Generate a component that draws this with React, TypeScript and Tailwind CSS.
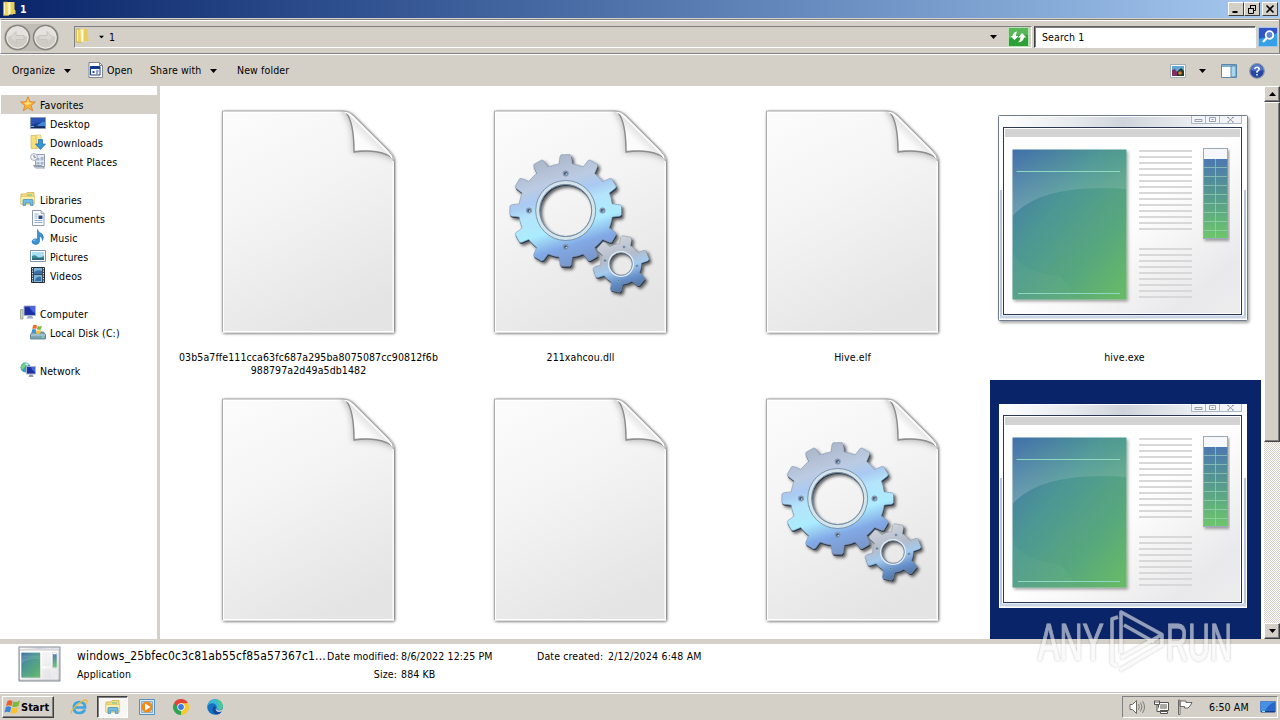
import React from 'react'

type FileKind = 'blank' | 'dll' | 'exe'

interface FileItem {
  id: number
  name: string
  kind: FileKind
  selected?: boolean
}

interface NavItem {
  label: string
  icon: React.ReactNode
  root?: boolean
  gap?: boolean
  active?: boolean
}

const files: FileItem[] = [
  { id: 1, name: '03b5a7ffe111cca63fc687a295ba8075087cc90812f6b988797a2d49a5db1482', kind: 'blank' },
  { id: 2, name: '211xahcou.dll', kind: 'dll' },
  { id: 3, name: 'Hive.elf', kind: 'blank' },
  { id: 4, name: 'hive.exe', kind: 'exe' },
  { id: 5, name: '', kind: 'blank' },
  { id: 6, name: '', kind: 'blank' },
  { id: 7, name: '', kind: 'dll' },
  { id: 8, name: '', kind: 'exe', selected: true },
]

const gearPath = (cx: number, cy: number, outer: number, root: number, teeth: number, offset: number, hole: number) => {
  const step = (Math.PI * 2) / teeth
  const point = (r: number, a: number) => `${(cx + r * Math.sin(a)).toFixed(2)} ${(cy - r * Math.cos(a)).toFixed(2)}`
  const parts: string[] = []
  for (let i = 0; i < teeth; i++) {
    const a = offset + i * step
    parts.push(point(root, a - step * 0.27), point(outer - 1.5, a - step * 0.2), point(outer, a - step * 0.15))
    parts.push(point(outer, a + step * 0.15), point(outer - 1.5, a + step * 0.2), point(root, a + step * 0.27))
    parts.push(point(root, a + step * 0.5))
  }
  return `M${parts.join('L')}ZM${cx - hole} ${cy}a${hole} ${hole} 0 1 0 ${hole * 2} 0a${hole} ${hole} 0 1 0 ${-hole * 2} 0Z`
}

const bigGear = gearPath(119.7, 118.5, 56, 47, 12, 0, 26)
const smallGear = gearPath(175, 172, 28.5, 20.5, 6, 0.2, 11.5)

const Gears: React.FC<{ id: number }> = ({ id }) => (
  <g>
    <defs>
      <linearGradient id={`gear${id}`} x1="0.35" y1="0" x2="0.65" y2="1">
        <stop offset="0" stopColor="#a9b4c6" />
        <stop offset="0.24" stopColor="#bccbe2" />
        <stop offset="0.36" stopColor="#a9caf2" />
        <stop offset="0.46" stopColor="#b4e4fb" />
        <stop offset="0.64" stopColor="#abecfd" />
        <stop offset="0.8" stopColor="#82a9e6" />
        <stop offset="1" stopColor="#7893c4" />
      </linearGradient>
      <linearGradient id={`cog${id}`} x1="0.3" y1="0" x2="0.6" y2="1">
        <stop offset="0" stopColor="#d3d5db" />
        <stop offset="0.4" stopColor="#b3bccb" />
        <stop offset="0.58" stopColor="#a3cbf0" />
        <stop offset="0.78" stopColor="#6791ca" />
        <stop offset="1" stopColor="#4f7099" />
      </linearGradient>
      <filter id={`gs${id}`} x="-20%" y="-20%" width="140%" height="140%">
        <feDropShadow dx="2" dy="2" stdDeviation="1.5" floodColor="#222" floodOpacity="0.7" />
      </filter>
    </defs>
    <g filter={`url(#gs${id})`}>
      <path d={bigGear} transform="translate(0.5 1.3)" fill="#1f2e42" fillRule="evenodd" />
      <path d={bigGear} fill={`url(#gear${id})`} stroke="#8095ad" strokeWidth="0.6" fillRule="evenodd" />
    </g>
    <circle cx="119.7" cy="118.5" r="28" fill="none" stroke="#d5e3ea" strokeWidth="3.2" />
    <circle cx="119.7" cy="118.5" r="30" fill="none" stroke="#7390a8" strokeWidth="0.9" />
    <circle cx="119.7" cy="118.5" r="26" fill="none" stroke="#75889a" strokeWidth="1" />
    {[[119.7, 81.5], [156.5, 118.5], [119.7, 155], [83, 118.5]].map(([x, y]) => (
      <g key={`${x}-${y}`}>
        <circle cx={x} cy={y} r="3" fill="#8298b2" />
        <circle cx={x} cy={y} r="1.6" fill="#3d536f" />
        <circle cx={x + 0.6} cy={y + 0.6} r="0.8" fill="#c2e2f5" />
      </g>
    ))}
    <g filter={`url(#gs${id})`}>
      <path d={smallGear} transform="translate(0.5 1.1)" fill="#1f2e42" fillRule="evenodd" />
      <path d={smallGear} fill={`url(#cog${id})`} stroke="#8494a8" strokeWidth="0.5" fillRule="evenodd" />
    </g>
    <circle cx="175" cy="172" r="12.3" fill="none" stroke="#e3ebf1" strokeWidth="1.5" />
    <circle cx="175" cy="172" r="11.3" fill="none" stroke="#66809b" strokeWidth="0.7" />
    {[[178, 155], [191, 174], [172.5, 188.5], [159, 168.5]].map(([x, y]) => (
      <circle key={x} cx={x} cy={y} r="1.3" fill="#5d7694" stroke="#a4bcd4" strokeWidth="0.5" />
    ))}
  </g>
)

const PageIcon: React.FC<{ id: number; gears?: boolean }> = ({ id, gears }) => (
  <svg className="block" width="271" height="258" viewBox="0 0 271 258">
    <defs>
      <linearGradient id={`pg${id}`} x1="0.2" y1="0" x2="0.6" y2="1">
        <stop offset="0" stopColor="#fbfbfb" />
        <stop offset="0.4" stopColor="#f4f4f4" />
        <stop offset="1" stopColor="#e4e4e4" />
      </linearGradient>
      <linearGradient id={`fold${id}`} x1="0.1" y1="0.9" x2="0.6" y2="0.4">
        <stop offset="0" stopColor="#fff" />
        <stop offset="0.6" stopColor="#fbfbfb" />
        <stop offset="1" stopColor="#d8d8d8" />
      </linearGradient>
      <filter id={`ps${id}`} x="-10%" y="-10%" width="120%" height="120%">
        <feDropShadow dx="0.7" dy="0.7" stdDeviation="1.4" floodColor="#000" floodOpacity="0.75" />
      </filter>
      <filter id={`fs${id}`} x="-50%" y="-50%" width="200%" height="200%">
        <feGaussianBlur stdDeviation="3" />
      </filter>
      <clipPath id={`pc${id}`}>
        <path d="M48 18.500H168Q174 18.500 179 23L214 58Q220 64 220 69V240.500H48Z" />
      </clipPath>
    </defs>
    <path d="M48.500 19H168Q174 18.500 179 23L214 58Q220 64 220 69V240.500H48.500Z" fill="#fff" filter={`url(#ps${id})`} />
    <path d="M49.500 20.500H168Q174 19.500 179 24L214 59Q219.500 65 219.500 70V239.500H49.500Z" fill={`url(#pg${id})`} />
    <path d="M48.500 240V19H168" fill="none" stroke="#ababab" />
    <path d="M49.500 20.500H168M219 69V239.500H49.500V20.500" fill="none" stroke="#fff" />
    <g clipPath={`url(#pc${id})`}>
      <path d="M166 17Q180 28 179 61Q207 59 221 69L222 55L178 13Z" fill="#777" opacity="0.5" filter={`url(#fs${id})`} />
    </g>
    <path d="M168 19Q180.500 25 180.500 58.500Q210 57 219.500 68Q219 63 214 58L179 23Q174 19 168 19Z" fill={`url(#fold${id})`} />
    <path d="M172 20.500Q180 30 180 60Q206 56.500 218 66" fill="none" stroke="#8d8d8d" strokeWidth="1.400" />
    <path d="M168 19Q174 18.500 179 23L214 58Q219.500 64 219.500 69" fill="none" stroke="#a5a5a5" strokeWidth="1" />
    <path d="M171 20.500Q174 20.500 178 24.500L213 59.500Q217 63 218 66" fill="none" stroke="#fff" strokeWidth="1.400" />
    {gears && <Gears id={id} />}
  </svg>
)

const lineRows = [...Array.from({ length: 14 }, (_, i) => 59 + i * 6), ...Array.from({ length: 9 }, (_, i) => 157 + i * 6)]

const ExeArt: React.FC<{ id: number; selected?: boolean }> = ({ id, selected }) => (
  <g>
    <defs>
      <linearGradient id={`fr${id}`} x1="0" y1="0" x2="1" y2="0">
        <stop offset="0" stopColor="#fff" />
        <stop offset="0.3" stopColor="#e6e9ed" />
        <stop offset="0.5" stopColor="#cfd4dc" />
        <stop offset="0.75" stopColor="#e6eaef" />
        <stop offset="1" stopColor="#fff" />
      </linearGradient>
      <linearGradient id={`bd${id}`} x1="0" y1="0" x2="1" y2="1">
        <stop offset="0.5" stopColor="#fff" />
        <stop offset="0.85" stopColor="#e9e9eb" />
        <stop offset="1" stopColor="#ededee" />
      </linearGradient>
      <linearGradient id={`pic${id}`} x1="0" y1="0" x2="0.9" y2="1">
        <stop offset="0" stopColor="#416fab" />
        <stop offset="0.4" stopColor="#4d9794" />
        <stop offset="0.75" stopColor="#58a87c" />
        <stop offset="1" stopColor="#66b968" />
      </linearGradient>
      <linearGradient id={`gloss${id}`} x1="0" y1="0" x2="0" y2="1">
        <stop offset="0" stopColor="#fff" stopOpacity="0" />
        <stop offset="1" stopColor="#fff" stopOpacity="0.2" />
      </linearGradient>
      <linearGradient id={`bar${id}`} x1="0" y1="0" x2="0" y2="1">
        <stop offset="0" stopColor="#4c78b0" />
        <stop offset="0.45" stopColor="#55998f" />
        <stop offset="1" stopColor="#6cc66c" />
      </linearGradient>
      <filter id={`es${id}`} x="-10%" y="-10%" width="120%" height="125%">
        <feDropShadow dx="1.500" dy="2" stdDeviation="1.500" floodColor="#000" floodOpacity="0.35" />
      </filter>
    </defs>
    {selected ? (
      <rect x="9" y="24" width="248" height="204" fill="#fff" />
    ) : (
      <rect x="8.500" y="23.500" width="249" height="205" rx="1" fill="#fff" stroke="#717b8d" filter={`url(#es${id})`} />
    )}
    <rect x="10" y="25" width="246" height="10" fill={`url(#fr${id})`} />
    <path d="M11 98V225M255 98V225" stroke="#b9c8dc" strokeWidth="2" />
    <path d="M10 225H256" stroke="#c9d5e4" strokeWidth="3" />
    <rect x="13.500" y="35.500" width="238" height="187" fill={`url(#bd${id})`} stroke="#2c3852" />
    <rect x="14.500" y="36.500" width="236" height="185" fill="none" stroke="#fff" />
    <rect x="15" y="37" width="235" height="8" fill="#d3d3d3" />
    <path d="M201.500 24V31.500H251.500V24M215.500 24V31M229.500 24V31" fill="#f3f4f7" stroke="#9ba6b8" strokeWidth="0.800" />
    <path d="M205 27.500h7v2h-7ZM219.500 25.500h6v4h-6ZM221.500 27.500h2M238 25.500l5 4.500M243 25.500l-5 4.500M237 25.500h2M242 25.500h2M237 30h2M242 30h2" fill="none" stroke="#8d98aa" strokeWidth="0.900" />
    <g filter={`url(#es${id})`}>
      <rect x="22.500" y="57.500" width="114" height="150" fill={`url(#pic${id})`} />
    </g>
    <path d="M22.500 57.500H136.500V97Q52 91 22.500 124Z" fill={`url(#gloss${id})`} />
    <path d="M22.500 162Q36 182 70 184Q90 204 80 207.500H22.500Z" fill="#8ec0a0" opacity="0.1" />
    <path d="M26.500 79.500H130M28 201.500H130" stroke="#8fd9c2" strokeWidth="1" />
    <g fill="#d8d8d8">
      {lineRows.map((y) => (
        <rect key={y} x="149" y={y - 1} width="53" height="2" />
      ))}
    </g>
    <g filter={`url(#es${id})`}>
      <rect x="213.500" y="56.500" width="24" height="90" fill="#f5f7fa" stroke="#9daabb" />
    </g>
    <rect x="214" y="67" width="23.500" height="79" fill={`url(#bar${id})`} />
    <path d="M214 75.500h23M214 84.500h23M214 93.500h23M214 102.500h23M214 111.500h23M214 120.500h23M214 129.500h23M214 138.500h23M225.500 67v79" stroke="#a4d3bd" strokeWidth="0.800" opacity="0.800" />
  </g>
)

const FolderIcon = () => (
  <svg width="16" height="16" viewBox="0 0 16 16">
    <path d="M2.500 1h4l1 1v12.500H2.500Z" fill="#ecd468" stroke="#c6a642" strokeWidth="0.600" />
    <path d="M6 1h6v12.500H7Z" fill="#f6e58e" />
    <path d="M7.500 2.500l1.500-1V13l-1.500 1.500Z" fill="#fffbe0" />
    <path d="M10 1h3.500v7.500l1 1V13H10Z" fill="#e8cc5c" />
    <path d="M3.500 2v11" stroke="#fdf4b8" />
  </svg>
)

const LibraryIcon: React.FC<{ size?: number }> = ({ size = 16 }) => (
  <svg width={size} height={size} viewBox="0 0 16 16">
    <path d="M1 3h5l1-1.500h7V13H1Z" fill="#f2dc7c" stroke="#cba94a" strokeWidth="0.700" />
    <path d="M7 3h5v2H7z" fill="#a9d18b" />
    <path d="M.7 5.500h14V13H.7Z" fill="#fbeeab" stroke="#d1b65b" strokeWidth="0.500" />
    <path d="M3 14.500V9.500q0-1 1-1h8q1 0 1 1v5h-2.500V12h-5v2.500Z" fill="#72bce4" stroke="#3d8ab8" strokeWidth="0.700" />
  </svg>
)

const DesktopIcon: React.FC<{ size?: number }> = ({ size = 16 }) => (
  <svg width={size} height={size} viewBox="0 0 16 16">
    <path d="M.5 2.500h15v11H.5Z" fill="#1c3f93" stroke="#8b9bb5" />
    <path d="M1 3h14v5q-6-2-14 2Z" fill="#2a55b5" />
    <path d="M9 9q4-3 6-2v4H7Z" fill="#4385d6" />
    <path d="M1 11.500h14V13H1Z" fill="#152a55" />
    <path d="M1 11.500h3" stroke="#6ec5ef" />
  </svg>
)

const ExeMini = () => (
  <svg width="15" height="16" viewBox="0 0 15 16">
    <path d="M1 .5h10.500l3 3v12H1Z" fill="#fff" stroke="#7b8490" />
    <path d="M11.500.5v3h3" fill="none" stroke="#7b8490" />
    <path d="M2.500 4.500h9.500v8.500H2.500Z" fill="#fff" stroke="#123a8c" />
    <path d="M2.500 4h9.500v3H2.500z" fill="#123a8c" />
    <path d="M4.500 9h2v2h-2zM8 8.500h2.500v1H8zM8 10.500h2v1h-2z" fill="#1d4ba5" />
  </svg>
)

const navItems: NavItem[] = [
  {
    label: 'Favorites',
    root: true,
    active: true,
    icon: (
      <svg width="16" height="16" viewBox="0 0 16 16">
        <path d="M8 .7l2 5 5.400.3-4.200 3.400 1.500 5.400L8 11.800l-4.700 3 1.500-5.400L.6 6 6 5.700Z" fill="#f9b53a" stroke="#d97f26" strokeWidth="0.800" />
        <path d="M8 3l1 3.500 3 .4-5 2-3-2 2.800-.4Z" fill="#ffe17c" />
      </svg>
    ),
  },
  { label: 'Desktop', icon: <DesktopIcon /> },
  {
    label: 'Downloads',
    icon: (
      <svg width="16" height="16" viewBox="0 0 16 16">
        <path d="M1 1.500h5l1 13H1Z" fill="#f4df79" stroke="#cdb24a" strokeWidth="0.600" />
        <path d="M6 1h5v13H7Z" fill="#f9eaa0" stroke="#cdb24a" strokeWidth="0.500" />
        <path d="M8.500 5.500h4v4.500h3l-5 5.500-5-5.500h3Z" fill="#3597db" stroke="#1f6aa8" strokeWidth="0.700" />
      </svg>
    ),
  },
  {
    label: 'Recent Places',
    icon: (
      <svg width="16" height="16" viewBox="0 0 16 16">
        <path d="M5.500 1.500h9v12h-9ZM3.500 12.500h8l3 2.500h-9Z" fill="#e6edf4" stroke="#8593a3" strokeWidth="0.900" />
        <path d="M6.500 5h3v2.500h-3zM10.500 4h3v3.500h-3zM6.500 9h3v2.500h-3zM10.500 9h3v2.500h-3z" fill="#a3b6c9" />
        <circle cx="4" cy="4" r="3.400" fill="#f3f6f9" stroke="#9aa7b6" strokeWidth="0.900" />
        <path d="M4 2v2.300h2" fill="none" stroke="#5e6c7c" strokeWidth="0.800" />
      </svg>
    ),
  },
  { label: 'Libraries', root: true, gap: true, icon: <LibraryIcon /> },
  {
    label: 'Documents',
    icon: (
      <svg width="16" height="16" viewBox="0 0 16 16">
        <path d="M2.500.5h8.500l3 3v12H2.500Z" fill="#fdfdfe" stroke="#8d9bae" />
        <path d="M11 .5v3h3" fill="#dde6f0" stroke="#8d9bae" strokeWidth="0.800" />
        <path d="M4.500 4h4M4.500 6h3M4.500 8h3M4.500 10.500h8M4.500 12.500h8" stroke="#88a5cc" strokeWidth="0.900" />
        <path d="M8.500 5.500h4v3.500h-4z" fill="#274b83" />
      </svg>
    ),
  },
  {
    label: 'Music',
    icon: (
      <svg width="16" height="16" viewBox="0 0 16 16">
        <path d="M7.500.5Q8 3 12 5q2.500 3 .5 6.500Q12.500 8 9.500 7v5.500Q9 15.500 5.500 15.500 2 15 2 12.500 2.500 9.700 6 9.800l1.500.5Z" fill="#3b93d8" stroke="#1f68ab" strokeWidth="0.600" />
        <path d="M3.500 12q.6-1.300 2-1.200" stroke="#b5e2fb" fill="none" />
      </svg>
    ),
  },
  {
    label: 'Pictures',
    icon: (
      <svg width="16" height="16" viewBox="0 0 16 16">
        <path d="M.5 2.500h15v11H.5Z" fill="#fff" stroke="#7e94a8" />
        <path d="M2 4h12v8H2z" fill="#a9def5" />
        <path d="M2 8q3-1.500 5 .5T14 8v4H2Z" fill="#3a8d92" />
        <path d="M2 10.500q5-1 12 0V12H2Z" fill="#2d6678" />
      </svg>
    ),
  },
  {
    label: 'Videos',
    icon: (
      <svg width="16" height="16" viewBox="0 0 16 16">
        <path d="M1.500.5h13v15h-13Z" fill="#3c4857" stroke="#212a35" />
        <path d="M4 1h8v6H4zM4 8h8v7H4z" fill="#7db4dc" />
        <path d="M4 5q4-3 8-1v3H4zM5 14q1-5 6-4v4z" fill="#3a6fa3" />
        <path d="M2.500 1v14M13.500 1v14" stroke="#e5edf4" strokeDasharray="1.200 1.300" />
      </svg>
    ),
  },
  {
    label: 'Computer',
    root: true,
    gap: true,
    icon: (
      <svg width="16" height="16" viewBox="0 0 16 16">
        <path d="M.5 4.500h2.500v9.500H.5Z" fill="#cbd8bd" stroke="#8f9d94" strokeWidth="0.800" />
        <path d="M4 1h11.500v9.500H4Z" fill="#1e2fa5" stroke="#a9b4c4" />
        <path d="M9 1.500h6V8Q12 7 9 1.500Z" fill="#4a66dd" />
        <path d="M8 11h4l1.500 2.500h-7Z" fill="#9eabc0" />
      </svg>
    ),
  },
  {
    label: 'Local Disk (C:)',
    icon: (
      <svg width="16" height="16" viewBox="0 0 16 16">
        <path d="M.5 10.500l2-2.500h11l2 2.500v4.500H.5Z" fill="#7ba5b4" stroke="#557886" strokeWidth="0.800" />
        <path d="M1 11h14" stroke="#c4dde6" />
        <path d="M12 13h2" stroke="#7ef08b" />
        <path d="M3 1.500Q5 0 7 1.500L6.300 5Q4.500 3.800 2.300 5Z" fill="#ee6b2d" />
        <path d="M7.600 1.800Q9.500 3 12 1.800L11 5.200Q9 6.200 6.900 5.200Z" fill="#7fb93c" />
        <path d="M2.100 5.600Q4 4.500 6.100 5.700L5.400 9Q3.500 8 1.500 9Z" fill="#3b8edb" />
        <path d="M6.700 6Q8.800 7 11 6l-.9 3.500Q8 10.300 6 9.300Z" fill="#f9c22e" />
      </svg>
    ),
  },
  {
    label: 'Network',
    root: true,
    gap: true,
    icon: (
      <svg width="16" height="16" viewBox="0 0 16 16">
        <circle cx="5.500" cy="5.500" r="5" fill="#3c9cb5" />
        <path d="M2 3q3-3 6-1.500Q5 3 5 5L2 8Q0 5 2 3Z" fill="#75d27f" />
        <path d="M5 2q2-1 4 0l-2 2Z" fill="#d2f4fa" />
        <path d="M6.500 4.500h9v7.500h-9Z" fill="#1e2fa5" stroke="#a9b4c4" />
        <path d="M11 5h4v5q-3-1-4-5Z" fill="#4a66dd" />
        <path d="M9.500 12.500h3l1 2.500h-5Z" fill="#8a97ab" />
      </svg>
    ),
  },
]

const Caret = () => (
  <svg width="7" height="4" viewBox="0 0 7 4">
    <path d="M0 0h7L3.500 4Z" />
  </svg>
)

const RoundButton: React.FC<{ flip?: boolean }> = ({ flip }) => (
  <svg className={flip ? '-scale-x-100' : ''} width="27" height="27" viewBox="0 0 27 27">
    <circle cx="13.500" cy="13.500" r="12" fill="#cfccc6" stroke="#85827c" strokeWidth="1.600" />
    <circle cx="13.500" cy="13.500" r="10.600" fill="none" stroke="#efedea" strokeWidth="1" />
    <path d="M3 13Q13 9 24 13A10.500 10.500 0 0 0 3 13Z" fill="#e4e2de" />
    <path d="M6 13.500l6-6v4h8v4h-8v4Z" fill="#dad7d2" stroke="#c3c0ba" strokeWidth="0.800" />
  </svg>
)

const WindowButton: React.FC<{ children: React.ReactNode }> = ({ children }) => (
  <div className="flex h-[14px] w-4 items-center justify-center border border-t-white border-l-white border-r-[#404040] border-b-[#404040] bg-[#d4d0c8]">
    <svg width="10" height="10" viewBox="0 0 10 10" fill="none" stroke="#000">
      {children}
    </svg>
  </div>
)

const ScrollButton: React.FC<{ down?: boolean }> = ({ down }) => (
  <div className="flex h-4 w-4 items-center justify-center border border-t-white border-l-white border-r-[#404040] border-b-[#404040] bg-[#d4d0c8] shadow-[inset_-1px_-1px_0_#808080]">
    <svg className={down ? '' : 'rotate-180'} width="7" height="4" viewBox="0 0 7 4">
      <path d="M0 0h7L3.500 4Z" />
    </svg>
  </div>
)

const Watermark = () => (
  <svg className="absolute top-[600px] left-[1030px] overflow-visible" width="210" height="80" viewBox="0 0 210 80">
    <defs>
      <filter id="wm" x="-10%" y="-10%" width="120%" height="120%">
        <feDropShadow dx="0" dy="0" stdDeviation="1.300" floodColor="#333" floodOpacity="0.600" />
      </filter>
    </defs>
    <g filter="url(#wm)" opacity="0.580">
      <text x="8" y="59.500" textLength="66" lengthAdjust="spacingAndGlyphs" fontFamily="Liberation Sans, sans-serif" fontSize="52" fill="#f8f8f8" stroke="#f8f8f8" strokeWidth="1">
        ANY
      </text>
      <text x="136" y="59.500" textLength="66" lengthAdjust="spacingAndGlyphs" fontFamily="Liberation Sans, sans-serif" fontSize="52" fill="#f8f8f8" stroke="#f8f8f8" strokeWidth="1">
        RUN
      </text>
      <g fill="none" stroke="#f8f8f8" strokeWidth="3.500" strokeLinejoin="round">
        <path d="M88 17l-6 2V63l5 3M91 53V12L132 34.500 91 58M90 70L132 45V35M94 25L124 42" />
      </g>
    </g>
  </svg>
)

const App: React.FC = () => {
  return (
    <div className="relative flex h-[720px] w-[1280px] flex-col overflow-hidden bg-[#d4d0c8] font-['DejaVu_Sans_Condensed','DejaVu_Sans',sans-serif] text-[10.5px] leading-[13px] tracking-[0.12px] text-black">
      {/* Title bar */}
      <div className="flex h-[18px] shrink-0 items-center bg-gradient-to-r from-[#0a246a] to-[#a6caf0] pr-[2px] pl-px">
        <FolderIcon />
        <span className="ml-[3px] font-bold text-white">1</span>
        <div className="ml-auto flex">
          <WindowButton><path d="M1.500 8h5" strokeWidth="2" /></WindowButton>
          <WindowButton><path d="M3 1.500h6M3.500 1v3M8.500 1v5.500H7M1 4.500h6M1.500 4v5.500h5V4" /></WindowButton>
          <div className="ml-[2px]">
            <WindowButton><path d="M1.500 1.500l7 7M8.500 1.500l-7 7" strokeWidth="1.600" /></WindowButton>
          </div>
        </div>
      </div>

      {/* Address bar */}
      <div className="mt-px flex h-[35px] shrink-0 items-center border border-t-[#808080] border-r-[#808080] border-b-[#808080] border-l-white pt-px pr-px pl-[3px] shadow-[inset_0_1px_0_#fff,0_1px_0_#fff]">
        <div className="flex gap-px rounded-full bg-[#c0bdb7]">
          <RoundButton />
          <RoundButton flip />
        </div>
        <div className="ml-[15px] flex h-[22px] flex-1 items-center border border-t-[#808080] border-r-white border-b-white border-l-[#808080]">
          <span className="-mt-[2px] -ml-px"><FolderIcon /></span>
          <span className="ml-2 scale-75"><Caret /></span>
          <span className="ml-1">1</span>
          <span className="mr-[11px] ml-auto"><Caret /></span>
          <svg className="mr-[2px]" width="21" height="20" viewBox="0 0 21 20">
            <rect x="0.500" y="0.500" width="20" height="19" fill="#2f9f37" stroke="#b9e0b4" />
            <path d="M1 1h19v7Q10 6 1 12Z" fill="#58b858" />
            <path d="M2.500 9h2Q5 5 9 4.500 8 6.500 8 9h2.500L6.500 13Z" fill="#fff" />
            <path d="M18.500 10.500L14 6l-4 4.500h2.500q0 3-2.500 5 5-.5 6-5Z" fill="#fff" />
          </svg>
        </div>
        <div className="ml-[2px] flex h-[22px] w-[222px] items-center border border-t-[#606060] border-r-white border-b-white border-l-[#404040] bg-white pl-[7px] shadow-[inset_1px_1px_0_#808080]">
          Search 1
        </div>
        <svg className="ml-[2px]" width="20" height="20" viewBox="0 0 20 20">
          <rect x="0.500" y="0.500" width="19" height="19" fill="#2160c5" stroke="#a5c4ea" />
          <path d="M1 12Q12 10 19 5V19H1Z" fill="#35a0e6" />
          <path d="M1 1h18v5Q10 10 1 10Z" fill="#3153c4" />
          <circle cx="11.500" cy="8" r="3.800" fill="#5d86d6" stroke="#fff" strokeWidth="1.800" />
          <path d="M8.700 11L5 15" stroke="#fff" strokeWidth="2.200" />
        </svg>
      </div>

      {/* Command bar */}
      <div className="mt-px flex h-[31px] shrink-0 items-center pr-[15px] pl-3">
        <span className="w-[52px]">Organize</span>
        <Caret />
        <span className="-mt-px ml-[17px]"><ExeMini /></span>
        <span className="ml-1 w-[43px]">Open</span>
        <span className="w-[60px]">Share with</span>
        <Caret />
        <span className="ml-5">New folder</span>
        <svg className="ml-auto" width="16" height="14" viewBox="0 0 16 14">
          <path d="M.5.500h15v13H.5Z" fill="#fff" stroke="#a3acb5" />
          <path d="M2 2h12v10H2z" fill="#5fa6d3" />
          <path d="M2 12V6l3-1 2 3 2-2v6Z" fill="#7d2e63" />
          <path d="M7 12V8l2-2 2-2 3 3v5Z" fill="#1c3b2d" />
          <circle cx="10" cy="9" r="1.800" fill="#e07b2b" />
        </svg>
        <span className="ml-[13px]"><Caret /></span>
        <svg className="ml-[15px]" width="16" height="14" viewBox="0 0 16 14">
          <path d="M.5.500h15v13H.5Z" fill="#fff" stroke="#5a87a8" />
          <path d="M1 2h14" stroke="#7fb0d0" strokeWidth="2" />
          <path d="M10 2h5v11h-5z" fill="#a8d8ee" stroke="#5a87a8" />
        </svg>
        <svg className="ml-3" width="16" height="16" viewBox="0 0 16 16">
          <circle cx="8" cy="8" r="7.300" fill="#2546a0" stroke="#8c96ab" strokeWidth="1.300" />
          <path d="M2 7a6 6 0 0 1 12 0Q8 9 2 7Z" fill="#5478c6" />
          <path d="M5.800 6Q5.900 4.200 8 4.200T10.200 6Q10.200 7.200 8 8.600V9.800M8 11v1.600" fill="none" stroke="#fff" strokeWidth="1.500" />
        </svg>
      </div>

      {/* Explorer body */}
      <div className="flex h-[553px] shrink-0 bg-white">
        <div className="w-[157px] pt-[9px] pl-px">
          {navItems.map((item) => (
            <div key={item.label} className={item.gap ? 'pt-[19px]' : ''}>
              <div className={`flex h-[19px] items-center gap-1 ${item.active ? 'bg-[#d4d0c8]' : ''} ${item.root ? 'pl-[19px]' : 'pl-[29px]'}`}>
                <span className="-mt-px">{item.icon}</span>
                <span className="pt-px whitespace-nowrap">{item.label}</span>
              </div>
            </div>
          ))}
        </div>
        <div className="w-[3px] bg-[#d4d0c8]" />
        <div className="grid h-full flex-1 auto-rows-[288px] grid-cols-[repeat(4,272px)] overflow-hidden pt-[6px] pl-[14px]">
          {files.map((file) => (
            <div key={file.id} className={`w-[271px] ${file.selected ? 'bg-[#0a246a]' : ''}`}>
              {file.kind === 'exe' ? (
                <svg className="block" width="271" height="258" viewBox="0 0 271 258">
                  <ExeArt id={file.id} selected={file.selected} />
                </svg>
              ) : (
                <PageIcon id={file.id} gears={file.kind === 'dll'} />
              )}
              {file.name && <p className="mt-px ml-[4px] w-[261px] text-center tracking-[0.1px] break-all">{file.name}</p>}
            </div>
          ))}
        </div>
        <div className="flex w-4 flex-col bg-[repeating-conic-gradient(#fff_0_25%,#d4d0c8_0_50%)] bg-[length:2px_2px]">
          <ScrollButton />
          <div className="h-[340px] border border-t-white border-l-white border-r-[#404040] border-b-[#404040] bg-[#d4d0c8] shadow-[inset_-1px_-1px_0_#808080]" />
          <div className="mt-auto"><ScrollButton down /></div>
        </div>
      </div>

      {/* Details pane */}
      <div className="mt-[5px] flex h-[48px] shrink-0 bg-white pl-[19px]">
        <svg className="mt-[3px] overflow-visible" width="41" height="34" viewBox="8 23 250 206" preserveAspectRatio="none">
          <ExeArt id={20} />
          <rect x="8" y="23" width="249" height="205" fill="none" stroke="#8f939a" strokeWidth="6" />
        </svg>
        <div className="ml-[17px] flex w-[250px] flex-col pt-[6px]">
          <span className="text-[12px] tracking-[0.15px] whitespace-nowrap">windows_25bfec0c3c81ab55cf85a57367c1...</span>
          <span className="mt-[5px]">Application</span>
        </div>
        <div className="grid h-9 grid-cols-[70px_auto] content-start gap-x-1 gap-y-[5px] pt-[6px] whitespace-nowrap">
          <span className="text-right">Date modified:</span>
          <span className="w-[92px]">8/6/2022 12:25 PM</span>
          <span className="text-right">Size:</span>
          <span>884 KB</span>
        </div>
        <div className="ml-[44px] flex pt-[6px] whitespace-nowrap">
          <span className="w-[71px]">Date created:</span>
          <span className="tracking-[0.2px]">2/12/2024 6:48 AM</span>
        </div>
      </div>

      {/* Taskbar */}
      <div className="flex flex-1 items-center border-t border-[#c5c2bb] pt-px pr-[2px] pl-[2px] shadow-[inset_0_1px_0_#fff]">
        <div className="flex h-[22px] w-[52px] items-center border border-t-white border-l-white border-r-[#404040] border-b-[#404040] pl-px text-[11px] font-bold tracking-normal shadow-[inset_-1px_-1px_0_#808080]">
          <svg width="17" height="16" viewBox="0 0 17 16">
            <path d="M3.500 2Q6 .3 8.500 2L7.500 7Q5 5.500 2 7Z" fill="#e9602c" />
            <path d="M9.300 2.500Q12 4 16 1.500L14.500 6.800Q11 9 8.200 7.400Z" fill="#7dba37" />
            <path d="M1.800 8Q4.500 6.500 7.200 8.200L6 13.500Q3.500 12 .5 13.500Z" fill="#3a87d9" />
            <path d="M8 8.500Q11 10 14.300 8L13 13.500Q9.500 15.500 6.800 14Z" fill="#f7c331" />
          </svg>
          <span>Start</span>
        </div>
        <svg className="ml-4" width="18" height="18" viewBox="0 0 18 18">
          <path d="M4 9.500h11Q15 4 9.500 4T3.800 9.700Q4 15 9.500 15q4 0 5.300-3.500" fill="none" stroke="#3ca4e0" strokeWidth="2.700" />
          <path d="M2 15.500Q-1 14 7 7T17 2.500Q17.300 4 15.500 6" fill="none" stroke="#e8b93d" strokeWidth="1.300" />
        </svg>
        <div className="ml-[9px] flex h-[22px] w-[31px] items-center justify-center border border-t-[#404040] border-r-white border-b-white border-l-[#404040] bg-[#f7f6f4] shadow-[inset_1px_1px_0_#808080]">
          <LibraryIcon />
        </div>
        <svg className="ml-[11px]" width="16" height="16" viewBox="0 0 16 16">
          <path d="M.5.500h15v15H.5Z" fill="#d9eaf6" stroke="#5591bd" />
          <path d="M2.500 2.500h11v11h-11Z" fill="#b5d7ee" stroke="#81b0d2" />
          <circle cx="8" cy="8" r="5.500" fill="#f18a1e" />
          <path d="M6 4.500L11.500 8 6 11.500Z" fill="#fff" />
        </svg>
        <svg className="ml-[18px]" width="16" height="16" viewBox="0 0 16 16">
          <path d="M8 8L1.070 4A8 8 0 0 1 14.930 4Z" fill="#e04437" />
          <path d="M8 8L14.930 4A8 8 0 0 1 8 16Z" fill="#f6ca2e" />
          <path d="M8 8L8 16A8 8 0 0 1 1.070 4Z" fill="#2fa352" />
          <path d="M8 4.300h6.930L11.200 9.600Z" fill="#f6ca2e" />
          <path d="M8 8H4.500L1.070 4H8Z" fill="#e04437" />
          <circle cx="8" cy="8" r="3.700" fill="#fff" />
          <circle cx="8" cy="8" r="2.900" fill="#3f79e8" />
        </svg>
        <svg className="ml-[18px]" width="16" height="16" viewBox="0 0 16 16">
          <circle cx="8" cy="8" r="7.800" fill="#1671c2" />
          <path d="M.5 7Q2 .3 8.500.2 15 .8 15.800 7q0 3.800-4 4-3 0-2-2.500Q9 4 5 4.300 2 4.500.5 7Z" fill="#38b9d8" />
          <path d="M9 .3Q15 1 15.800 7q0 3.500-3.500 4l-1-3Q13 4 9 .3Z" fill="#4fc98a" />
          <path d="M9.500 8q-2 4 1.700 5 2.500.5 4-1-2 3.300-5.500 3.600Q5 14 5.500 10 6 6.500 9.500 8Z" fill="#134a9c" />
          <path d="M9.500 8q-1.500 3.200 2.500 3.400 2.500 0 3.800-1.400l-.8 2q-2 1.500-4.500.8Q7.500 11 9.500 8Z" fill="#d4d0c8" />
        </svg>
        <div className="ml-auto flex h-[22px] w-[156px] items-center border border-t-[#808080] border-r-white border-b-white border-l-[#808080] pl-[6px]">
          <svg width="16" height="16" viewBox="0 0 16 16" fill="#fff" stroke="#6a6864">
            <path d="M1 5.500h2.500L7.500 1.500v13l-4-4H1Z" />
            <path d="M9.500 5q1.500 3 0 6M11.500 3.500q3 4.500 0 9M13.500 2q4 6 0 12" fill="none" strokeWidth="0.800" />
          </svg>
          <svg className="ml-2" width="17" height="16" viewBox="0 0 17 16" fill="#fff" stroke="#55534f">
            <path d="M5.500 3.500h10v8h-10Z" />
            <path d="M7.500 5.500h6v4h-6Z" fill="#aaa8a3" stroke="#aaa8a3" />
            <path d="M7.500 12.500h7v2h-7ZM1.500 1.500v4h5v-4M3 1v3M5 1v3M4 6v6.500h3.500" />
          </svg>
          <svg className="ml-[7px]" width="17" height="16" viewBox="0 0 17 16" fill="#fff" stroke="#6a6864">
            <path d="M1.500 1v14.500h1.500V1ZM3 2h6v1.500h6l-2 3.500-2 2H7.500V7.500H3Z" />
          </svg>
          <span className="ml-[15px] w-[51px] whitespace-nowrap">6:50 AM</span>
          <svg width="16" height="14" viewBox="0 0 16 14">
            <path d="M.5 1.500h15v10H.5Z" fill="#2867c9" stroke="#4f82c9" />
            <path d="M1 2h14Q8 4 5 11H1Z" fill="#4791e5" />
            <path d="M1 11h14v1.500H1z" fill="#153b82" />
            <path d="M2 11.500h3" stroke="#8fe2ff" />
          </svg>
        </div>
      </div>

      <Watermark />
    </div>
  )
}

export default App
